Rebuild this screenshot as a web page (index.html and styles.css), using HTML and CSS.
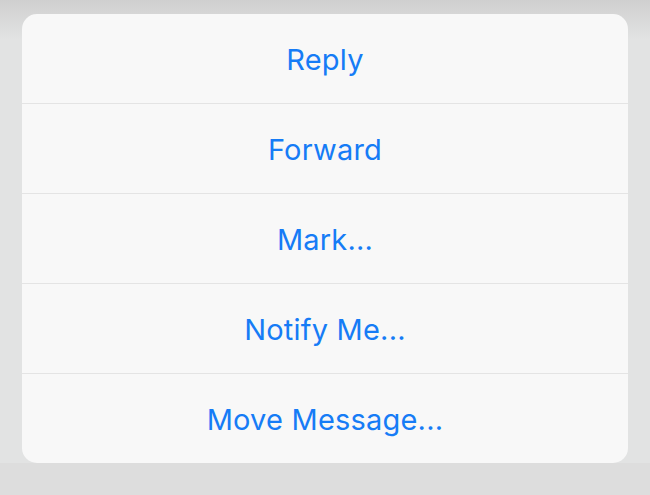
FILE: index.html
```html
<!DOCTYPE html>
<html>
<head>
<meta charset="utf-8">
<link rel="stylesheet" href="styles.css">
</head>
<body>
<div class="stage">
  <div class="sheet">
    <div class="item">Reply</div>
    <div class="item">Forward</div>
    <div class="item">Mark...</div>
    <div class="item">Notify Me...</div>
    <div class="item">Move Message...</div>
  </div>
</div>
</body>
</html>
```
FILE: styles.css
```css
html, body {
  margin: 0;
  padding: 0;
}
body {
  width: 650px;
  height: 495px;
  overflow: hidden;
  background: #e0e1e1;
  font-family: Inter, "Noto Sans", sans-serif;
}
.stage {
  width: 650px;
  height: 495px;
  box-sizing: border-box;
  padding: 14px 22px 0 22px;
  background:
    linear-gradient(to bottom, #cfcfcf 0px, #d6d6d6 14px, rgba(224,225,225,0) 40px),
    linear-gradient(to bottom, #e2e3e3 0, #e2e3e3 463px, #dddddd 463px, #dddddd 495px);
}
.sheet {
  width: 606px;
  height: 449px;
  background: #f8f8f8;
  border-radius: 15px;
  display: flex;
  flex-direction: column;
  overflow: hidden;
}
.item {
  height: 90px;
  flex: none;
  box-sizing: border-box;
  padding-top: 2px;
  display: flex;
  align-items: center;
  justify-content: center;
  color: #167cf6;
  font-size: 29px;
  letter-spacing: 0.2px;
  border-bottom: 1px solid #e4e4e4;
}
.item:last-child {
  height: 89px;
  border-bottom: none;
}
```
